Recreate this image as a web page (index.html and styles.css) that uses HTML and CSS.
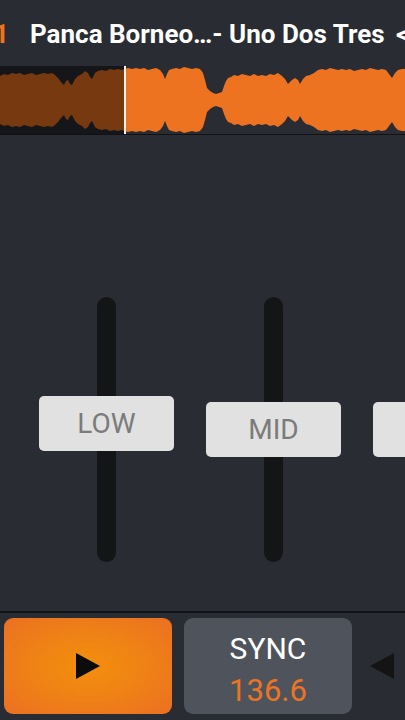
FILE: index.html
```html
<!DOCTYPE html>
<html lang="en">
<head>
    <meta charset="UTF-8">
    <meta name="viewport" content="width=device-width, initial-scale=1.0">
    <title>Deck</title>
    <link rel="stylesheet" href="styles.css">
</head>
<body>
    <div class="deck">
        <div class="header">
            <span class="deck-num">1</span>
            <span class="title">Panca Borneo…- Uno Dos Tres <span class="more">&lt;</span></span>
        </div>

        <div class="wave">
            <svg width="405" height="68" viewBox="0 0 405 68">
                <path fill="#ee7321" d="M0 10 L4 8 L8 9 L12 7 L16 8 L20 7 L24 9 L28 8 L32 7 L36 9 L40 8 L44 7 L48 8 L52 7 L55 9 L58 12 L61 16 L64 19 L66 15 L68 14 L70 18 L72 19 L75 13 L78 10 L82 8 L85 5 L88 7 L90 11 L92 13 L95 7 L98 5 L102 4 L106 5 L110 3 L114 4 L118 3 L122 4 L124 3
                    L128 2 L132 3 L136 2 L140 3 L144 2 L148 4 L152 3 L156 2 L160 4 L163 8 L165 13 L167 8 L169 4 L172 3 L176 2 L180 3 L184 1 L188 2 L192 3 L196 2 L200 3 L203 7 L205 14 L207 22 L210 25 L213 27 L216 28 L219 27 L222 26 L224 20 L226 15 L228 12 L231 11 L234 9 L238 10 L242 8 L246 9 L250 10 L254 8 L258 10 L262 9 L266 10 L270 8 L274 9 L278 7 L282 10 L285 13 L288 18 L290 16 L292 14 L295 12 L298 14 L300 18 L303 13 L306 10 L310 9 L314 7 L318 4 L322 3 L326 4 L330 2 L334 3 L338 4 L342 3 L346 4 L350 3 L354 5 L358 4 L362 3 L366 4 L370 2 L374 3 L378 4 L382 3 L386 4 L389 8 L392 12 L395 7 L398 4 L402 3 L405 3
                    L405 65 L402 65 L398 64 L395 61 L392 56 L389 60 L386 64 L382 65 L378 64 L374 65 L370 66 L366 64 L362 65 L358 64 L354 63 L350 65 L346 64 L342 65 L338 64 L334 65 L330 66 L326 64 L322 65 L318 64 L314 61 L310 59 L306 58 L303 55 L300 50 L298 54 L295 56 L292 54 L290 52 L288 50 L285 55 L282 58 L278 61 L274 59 L270 60 L266 58 L262 59 L258 58 L254 60 L250 58 L246 59 L242 60 L238 58 L234 59 L231 57 L228 56 L226 53 L224 48 L222 42 L219 41 L216 40 L213 41 L210 43 L207 46 L205 54 L203 61 L200 65 L196 66 L192 65 L188 66 L184 67 L180 65 L176 66 L172 65 L169 64 L167 60 L165 55 L163 60 L160 64 L156 66 L152 65 L148 64 L144 66 L140 65 L136 66 L132 65 L128 66
                    L124 65 L122 64 L118 65 L114 64 L110 65 L106 63 L102 64 L98 63 L95 61 L92 55 L90 57 L88 61 L85 63 L82 60 L78 58 L75 55 L72 49 L70 50 L68 54 L66 53 L64 49 L61 52 L58 56 L55 59 L52 61 L48 60 L44 61 L40 60 L36 59 L32 61 L28 60 L24 59 L20 61 L16 60 L12 61 L8 59 L4 60 L0 58 Z"/>
                <rect class="played" x="0" y="0" width="124" height="68"/>
                <rect class="playhead" x="124" y="0" width="2" height="68"/>
            </svg>
        </div>

        <div class="mixer">
            <div class="fader">
                <div class="track"></div>
                <div class="cap cap-low">LOW</div>
            </div>
            <div class="fader">
                <div class="track"></div>
                <div class="cap">MID</div>
            </div>
            <div class="fader">
                <div class="track"></div>
                <div class="cap"></div>
            </div>
        </div>

        <div class="controls">
            <button class="btn play">
                <svg width="26" height="26" viewBox="0 0 26 26"><path d="M1 0 L25 13 L1 26 Z" fill="#0c0c0c"/></svg>
            </button>
            <button class="btn sync">
                <span class="sync-label">SYNC</span>
                <span class="bpm">136.6</span>
            </button>
            <div class="nudge">
                <svg width="24" height="26" viewBox="0 0 24 26"><path d="M24 0 L0 13 L24 26 Z" fill="#141414"/></svg>
            </div>
        </div>
    </div>
</body>
</html>
```

FILE: styles.css
```css
body{
    margin: 0;
    padding: 0;
    background-color: #2a2c33;
    font-family: Roboto, "Liberation Sans", sans-serif;
    overflow: hidden;
}
.deck{
    width: 405px;
    height: 720px;
    display: flex;
    flex-direction: column;
    overflow: hidden;
}

.header{
    height: 66px;
    display: flex;
    align-items: center;
    white-space: nowrap;
    overflow: hidden;
    font-weight: 700;
    font-size: 26px;
    padding-top: 2px;
    box-sizing: border-box;
}
.deck-num{
    color: #ee7321;
    margin-left: -6px;
    width: 36px;
    flex-shrink: 0;
}
.title{
    color: #ffffff;
}
.more{
    margin-left: 5px;
}

.wave{
    height: 68px;
    border-bottom: 1px solid #111214;
    line-height: 0;
}
.wave svg{
    display: block;
}
.played{
    fill: rgba(0, 0, 0, 0.5);
}
.playhead{
    fill: #fff6ea;
}

.mixer{
    flex: 1;
    display: flex;
    padding-top: 162px;
    padding-left: 23px;
    overflow: hidden;
}
.fader{
    position: relative;
    width: 167px;
    flex-shrink: 0;
    display: flex;
    justify-content: center;
}
.track{
    width: 19px;
    height: 265px;
    border-radius: 10px;
    background-color: #141517;
}
.cap{
    position: absolute;
    top: 105px;
    left: 16px;
    width: 135px;
    height: 55px;
    border-radius: 5px;
    background-color: #e1e1e1;
    color: #7b7b7b;
    font-size: 28px;
    display: flex;
    align-items: center;
    justify-content: center;
}
.cap-low{
    top: 99px;
}

.controls{
    border-top: 2px solid #111214;
    display: flex;
    align-items: center;
    gap: 12px;
    padding: 5px 0 6px 4px;
}
.btn{
    width: 168px;
    height: 96px;
    border: none;
    border-radius: 9px;
    padding: 0;
    font-family: inherit;
    display: flex;
    flex-direction: column;
    align-items: center;
    justify-content: center;
}
.play{
    background: radial-gradient(ellipse at center, #f38f0c 0%, #ef8116 50%, #ea7022 100%);
}
.sync{
    background-color: #4f545c;
    padding-top: 8px;
}
.sync-label{
    color: #ffffff;
    font-size: 30px;
    line-height: 42px;
}
.bpm{
    color: #ed7422;
    font-size: 31px;
    line-height: 42px;
}
.nudge{
    margin-left: 6px;
    line-height: 0;
}
```
